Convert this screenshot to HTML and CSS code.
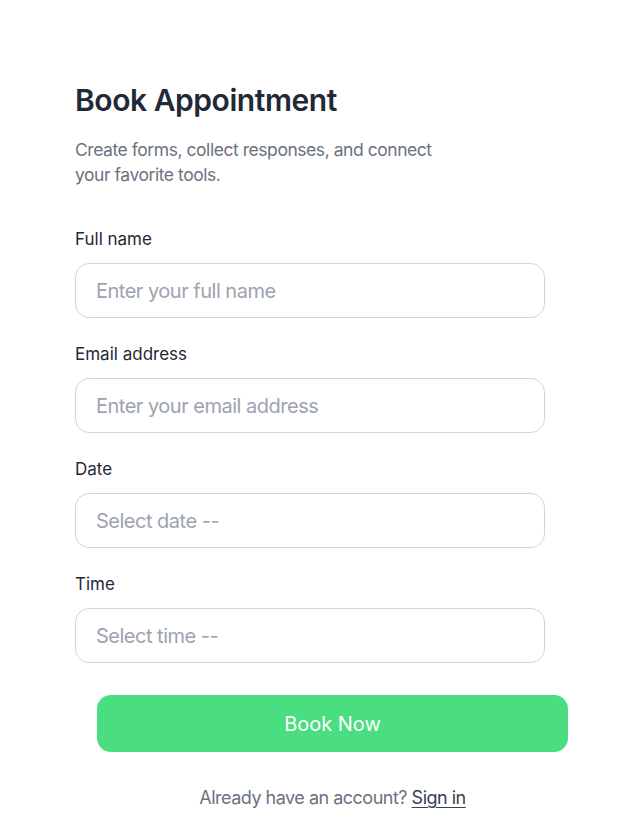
FILE: index.html
```html
<!DOCTYPE html>
<html lang="en">
<head>
<meta charset="utf-8">
<title>Book Appointment</title>
<link rel="stylesheet" href="styles.css">
</head>
<body>
<main class="page">
  <h1 class="title">Book Appointment</h1>
  <p class="subtitle">Create forms, collect responses, and connect your favorite tools.</p>
  <form class="form">
    <div class="field">
      <label class="label" for="name">Full name</label>
      <input class="input" id="name" type="text" placeholder="Enter your full name">
    </div>
    <div class="field">
      <label class="label" for="email">Email address</label>
      <input class="input" id="email" type="email" placeholder="Enter your email address">
    </div>
    <div class="field">
      <label class="label" for="date">Date</label>
      <input class="input" id="date" type="text" placeholder="Select date --">
    </div>
    <div class="field">
      <label class="label" for="time">Time</label>
      <input class="input" id="time" type="text" placeholder="Select time --">
    </div>
    <button class="button" type="button">Book Now</button>
  </form>
  <p class="footer">Already have an account? <a class="link" href="#">Sign in</a></p>
</main>
</body>
</html>
```
FILE: styles.css
```css
* { box-sizing: border-box; }
html, body { margin: 0; padding: 0; background: #ffffff; }
body { font-family: Inter, "Noto Sans", sans-serif; color: #1f2937; }
.page { width: 470px; margin-left: 75px; padding-top: 82px; }
.title { margin: 0; font-size: 30px; line-height: 36px; font-weight: 600; color: #1f2937; letter-spacing: -0.45px; }
.subtitle { margin: 19px 0 0; max-width: 368px; font-size: 17.5px; line-height: 25px; color: #6b7280; letter-spacing: -0.45px; }
.form { display: flex; flex-direction: column; gap: 24px; margin-top: 40px; }
.field { display: flex; flex-direction: column; gap: 12px; }
.label { font-size: 17px; line-height: 24px; color: #1f2937; font-weight: 400; }
.input { height: 55px; width: 100%; border: 1px solid #d1d5db; border-radius: 14px; padding: 0 20px; font-family: inherit; font-size: 20px; letter-spacing: -0.5px; color: #1f2937; background: #fff; outline: none; }
.input::placeholder { color: #9ca3af; }
.button { margin: 8px 0 0 22px; width: 471px; height: 57px; border: none; border-radius: 14px; background: #4ade80; color: #fff; font-family: inherit; font-size: 20px; font-weight: 400; }
.footer { margin: 32px 0 0 22px; width: 471px; text-align: center; font-size: 18px; line-height: 28px; color: #6b7280; letter-spacing: -0.5px; }
.link { color: #374151; text-decoration: underline; text-underline-offset: 3px; }
```
